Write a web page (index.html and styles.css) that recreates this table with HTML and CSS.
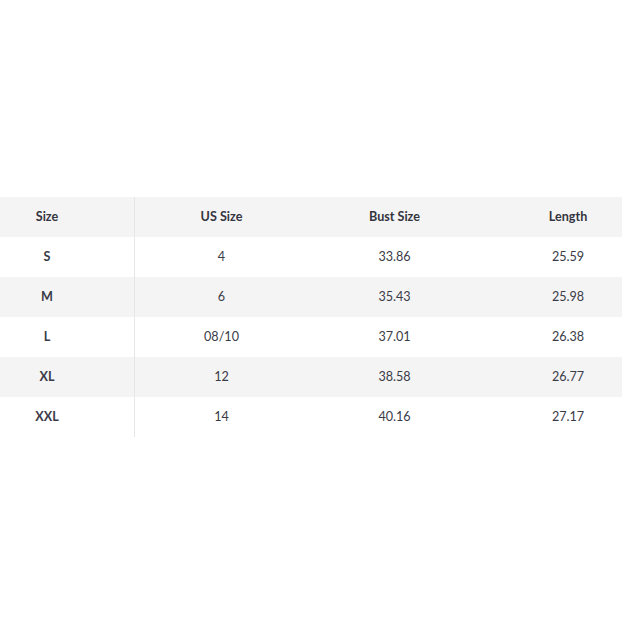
FILE: index.html
```html
<!DOCTYPE html>
<html>
<head>
<meta charset="utf-8">
<link rel="stylesheet" href="styles.css">
</head>
<body>
<div class="page">
  <div class="table">
    <div class="row head">
      <div class="cell c1">Size</div>
      <div class="cell c2">US Size</div>
      <div class="cell c3">Bust Size</div>
      <div class="cell c4">Length</div>
    </div>
    <div class="row">
      <div class="cell c1">S</div>
      <div class="cell c2">4</div>
      <div class="cell c3">33.86</div>
      <div class="cell c4">25.59</div>
    </div>
    <div class="row alt">
      <div class="cell c1">M</div>
      <div class="cell c2">6</div>
      <div class="cell c3">35.43</div>
      <div class="cell c4">25.98</div>
    </div>
    <div class="row">
      <div class="cell c1">L</div>
      <div class="cell c2">08/10</div>
      <div class="cell c3">37.01</div>
      <div class="cell c4">26.38</div>
    </div>
    <div class="row alt">
      <div class="cell c1">XL</div>
      <div class="cell c2">12</div>
      <div class="cell c3">38.58</div>
      <div class="cell c4">26.77</div>
    </div>
    <div class="row">
      <div class="cell c1">XXL</div>
      <div class="cell c2">14</div>
      <div class="cell c3">40.16</div>
      <div class="cell c4">27.17</div>
    </div>
  </div>
</div>
</body>
</html>
```

FILE: styles.css
```css
html, body {
  margin: 0;
  padding: 0;
  background: #fff;
}
.page {
  width: 623px;
  height: 623px;
  padding-top: 197px;
  box-sizing: border-box;
  font-family: Lato, "Noto Sans", sans-serif;
  font-size: 12.6px;
  color: #3a3b48;
}
.table {
  width: 622px;
  display: flex;
  flex-direction: column;
}
.row {
  display: grid;
  grid-template-columns: 134px 1px 173px 173px 1fr;
  height: 40px;
}
.row.head, .row.alt {
  background: #f4f4f4;
}
.row.head {
  font-weight: 700;
  color: #34353f;
}
.cell {
  display: flex;
  align-items: center;
  justify-content: center;
  padding-bottom: 2px;
  box-sizing: border-box;
}
.c1 {
  padding-right: 40px;
  font-weight: 700;
  border-right: 1px solid #e6e6e6;
  grid-column: 1 / 3;
}
.c4 {
  padding-left: 33px;
}
```
